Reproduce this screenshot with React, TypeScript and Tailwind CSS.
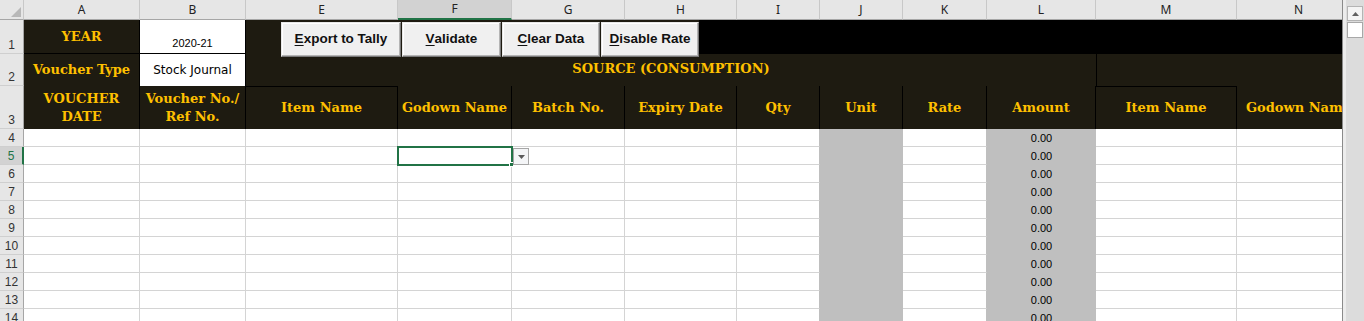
import React from "react";

// Column letters and widths as shown in the sheet (C and D are hidden)
const columns = ["A", "B", "E", "F", "G", "H", "I", "J", "K", "L", "M", "N"];
const dataRows = [4, 5, 6, 7, 8, 9, 10, 11, 12, 13, 14];

const dark = "bg-[#1e1b11]";
const gold =
  "font-['DejaVu_Serif',serif] font-bold text-[13px] leading-[18px] text-[#ffc000] text-center";

const RowHead = ({ n, active }: { n: number; active?: boolean }) => (
  <div
    className={`flex items-end justify-center border-b border-r border-b-[#cfcfcf] pb-[1px] text-[12px] leading-[14px] ${
      active
        ? "border-r-2 border-r-[#217346] bg-[#d2d2d2] text-[#217346]"
        : "border-r-[#a6a6a6] bg-[#e6e6e6] text-[#333]"
    }`}
  >
    {n}
  </div>
);

const HeaderCell = ({
  children,
  boxed,
}: {
  children: React.ReactNode;
  boxed?: boolean;
}) => (
  <div
    className={`flex items-center justify-center border-r border-black ${dark} ${
      boxed ? "border-t border-t-black" : ""
    }`}
  >
    <span className={`${gold} whitespace-nowrap`}>{children}</span>
  </div>
);

const SheetButton = ({ accel, rest, w }: { accel: string; rest: string; w: string }) => (
  <button
    className={`${w} flex h-[35px] items-center justify-center border border-t-[#e8e8e8] border-l-[#e8e8e8] border-r-[#7a7a7a] border-b-[#7a7a7a] bg-[#f0f0f0] font-['Liberation_Sans',sans-serif] text-[13.5px] font-bold text-[#111] shadow-[inset_-1px_-1px_0_#b4b4b4,inset_1px_1px_0_#ffffff]`}
  >
    <span className="underline underline-offset-2">{accel}</span>
    {rest}
  </button>
);

export default function App() {
  return (
    <div className="flex h-[321px] w-[1364px] overflow-hidden bg-white font-['Liberation_Sans',sans-serif]">
      <div className="relative w-[1343px] overflow-hidden border-r border-[#8a8a8a]">
        <div className="grid w-[1362px] grid-cols-[24px_116px_106px_152px_114px_113px_112px_83px_83px_84px_109px_141px_124px] grid-rows-[20px_34px_32px_43px_repeat(11,18px)]">
          {/* column header row */}
          <div className="relative border-b border-r border-b-[#a6a6a6] border-r-[#c8c8c8] bg-[#e6e6e6]">
            <svg className="absolute bottom-[2px] right-[2px]" width="10" height="10" viewBox="0 0 10 10">
              <polygon points="10,0 10,10 0,10" fill="#b8b8b8" />
            </svg>
          </div>
          {columns.map((c) => (
            <div
              key={c}
              className={`flex items-center justify-center border-r border-r-[#c8c8c8] font-['Noto_Sans',sans-serif] text-[12px] text-[#222] ${
                c === "F"
                  ? "border-b-2 border-b-[#217346] bg-[#d2d2d2]"
                  : "border-b border-b-[#a6a6a6] bg-[#e6e6e6]"
              }`}
            >
              {c}
            </div>
          ))}

          {/* row 1 */}
          <RowHead n={1} />
          <div className={`flex items-center justify-center border-b border-r border-black ${dark}`}>
            <span className={gold}>YEAR</span>
          </div>
          <div className="flex items-end justify-center border-b border-r border-black pb-[3px] text-[11px] leading-[13px] text-black">
            2020-21
          </div>
          <div className="col-span-10 flex">
            <div className={`w-[453px] ${dark}`} />
            <div className="flex-1 bg-black" />
          </div>

          {/* row 2 */}
          <RowHead n={2} />
          <div className={`flex items-center justify-center border-r border-black ${dark}`}>
            <span className={gold}>Voucher Type</span>
          </div>
          <div className="flex items-center justify-center border-r border-black font-['DejaVu_Sans',sans-serif] text-[12px] text-black">
            Stock Journal
          </div>
          <div className={`col-span-8 flex items-center justify-center pb-[2px] ${dark}`}>
            <span className={gold}>SOURCE (CONSUMPTION)</span>
          </div>
          <div className={`col-span-2 border-l border-black ${dark}`} />

          {/* row 3 */}
          <RowHead n={3} />
          <HeaderCell>
            VOUCHER
            <br />
            DATE
          </HeaderCell>
          <HeaderCell>
            Voucher No./
            <br />
            Ref No.
          </HeaderCell>
          <HeaderCell boxed>Item Name</HeaderCell>
          <HeaderCell>Godown Name</HeaderCell>
          <HeaderCell>Batch No.</HeaderCell>
          <HeaderCell>Expiry Date</HeaderCell>
          <HeaderCell>Qty</HeaderCell>
          <HeaderCell>Unit</HeaderCell>
          <HeaderCell>Rate</HeaderCell>
          <HeaderCell>Amount</HeaderCell>
          <HeaderCell boxed>Item Name</HeaderCell>
          <HeaderCell>Godown Name</HeaderCell>

          {/* data rows */}
          {dataRows.map((r) => (
            <React.Fragment key={r}>
              <RowHead n={r} active={r === 5} />
              {columns.map((c) =>
                c === "J" ? (
                  <div key={c} className="bg-[#bfbfbf]" />
                ) : c === "L" ? (
                  <div
                    key={c}
                    className="flex items-center justify-center bg-[#bfbfbf] text-[11px] leading-[13px] text-black"
                  >
                    0.00
                  </div>
                ) : (
                  <div
                    key={c}
                    className={`border-b border-r border-[#d4d4d4] ${c === "I" || c === "K" ? "border-r-[#bfbfbf]" : ""}`}
                  />
                )
              )}
            </React.Fragment>
          ))}
        </div>

        {/* form buttons floating over row 1 */}
        <div className="absolute left-[281px] top-[22px] flex gap-px">
          <SheetButton accel="E" rest="xport to Tally" w="w-[120px]" />
          <SheetButton accel="V" rest="alidate" w="w-[99px]" />
          <SheetButton accel="C" rest="lear Data" w="w-[98px]" />
          <SheetButton accel="D" rest="isable Rate" w="w-[98px]" />
        </div>

        {/* active cell F5 */}
        <div className="absolute left-[397px] top-[146px] h-[20px] w-[116px] border-2 border-[#217346]" />
        <div className="absolute left-[509px] top-[162px] h-[5px] w-[5px] border border-white bg-[#217346]" />
        <div className="absolute left-[513px] top-[148px] flex h-[17px] w-[16px] items-center justify-center border border-[#a6a6a6] bg-[#f4f5f7]">
          <svg width="7" height="4" viewBox="0 0 7 4">
            <polygon points="0,0 7,0 3.5,4" fill="#5a5a5a" />
          </svg>
        </div>
      </div>

      {/* vertical scrollbar */}
      <div className="flex w-[21px] flex-col items-center border-l-[3px] border-[#ececec] bg-[#dcdcdc] pt-[6px]">
        <div className="flex h-[15px] w-[16px] items-center justify-center border border-[#b4b4b4] bg-[#f4f4f4]">
          <svg width="7" height="4" viewBox="0 0 7 4">
            <polygon points="3.5,0 7,4 0,4" fill="#606060" />
          </svg>
        </div>
        <div className="mt-px h-[16px] w-[16px] border border-[#a8a8a8] bg-white" />
      </div>
    </div>
  );
}
